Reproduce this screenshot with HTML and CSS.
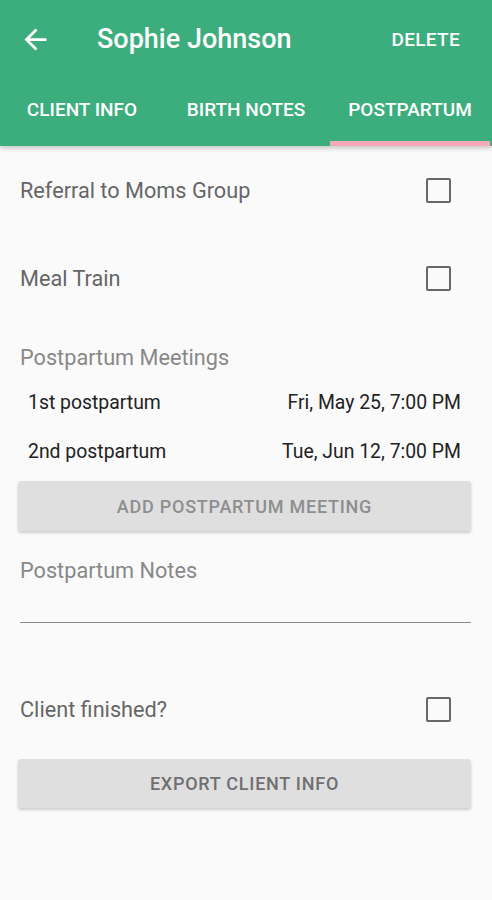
FILE: index.html
```html
<!DOCTYPE html>
<html>
<head>
<meta charset="utf-8">
<link rel="stylesheet" href="styles.css">
</head>
<body>
<div class="app">
  <header class="appbar">
    <div class="toolbar">
      <svg class="back" viewBox="0 0 24 24" width="33" height="33"><path fill="#fff" d="M20 11H7.83l5.59-5.59L12 4l-8 8 8 8 1.41-1.41L7.83 13H20v-2z"/></svg>
      <div class="title">Sophie Johnson</div>
      <div class="action">DELETE</div>
    </div>
    <nav class="tabs">
      <div class="tab">CLIENT INFO</div>
      <div class="tab">BIRTH NOTES</div>
      <div class="tab active">POSTPARTUM</div>
    </nav>
  </header>
  <main class="content">
    <div class="check-row">
      <span class="label">Referral to Moms Group</span>
      <span class="box"></span>
    </div>
    <div class="check-row">
      <span class="label">Meal Train</span>
      <span class="box"></span>
    </div>
    <div class="section-label meetings-label">Postpartum Meetings</div>
    <div class="meeting"><span>1st postpartum</span><span>Fri, May 25, 7:00 PM</span></div>
    <div class="meeting"><span>2nd postpartum</span><span>Tue, Jun 12, 7:00 PM</span></div>
    <div class="btn btn-add">ADD POSTPARTUM MEETING</div>
    <div class="section-label notes-label">Postpartum Notes</div>
    <div class="notes-input"></div>
    <div class="check-row finished">
      <span class="label">Client finished?</span>
      <span class="box"></span>
    </div>
    <div class="btn btn-export">EXPORT CLIENT INFO</div>
  </main>
</div>
</body>
</html>
```
FILE: styles.css
```css
* { box-sizing: border-box; }
html, body { margin: 0; padding: 0; }
body {
  background: #fafafa;
  font-family: Roboto, "Noto Sans", sans-serif;
  width: 492px;
  height: 900px;
  overflow: hidden;
}
.appbar {
  background: #3cad7d;
  color: #fff;
  box-shadow: 0 2px 5px rgba(0,0,0,0.22);
  position: relative;
  z-index: 1;
}
.toolbar {
  height: 78px;
  display: flex;
  align-items: center;
  padding: 0 32px 0 19px;
}
.back { display: block; flex: none; }
.title {
  margin-left: 45px;
  font-size: 27px;
  font-weight: 500;
  flex: 1;
}
.action {
  font-size: 19px;
  font-weight: 500;
  letter-spacing: 0.3px;
}
.tabs {
  display: flex;
  height: 68px;
}
.tab {
  flex: 1;
  display: flex;
  align-items: center;
  justify-content: center;
  font-size: 19px;
  font-weight: 500;
  color: #fff;
  padding-bottom: 0;
  border-bottom: 5px solid transparent;
  margin: 0 2px;
}
.tab.active { border-bottom-color: #f5a9bb; }
.content {
  padding: 0 21px 0 20px;
}
.check-row {
  height: 88px;
  display: flex;
  align-items: center;
  justify-content: space-between;
}
.label {
  font-size: 21.7px;
  color: #666;
}
.box {
  width: 25px;
  height: 25px;
  border: 2.5px solid #686868;
  border-radius: 2px;
  margin-right: 20px;
}
.section-label {
  font-size: 21.7px;
  line-height: 24px;
  color: #888;
}
.meetings-label { margin-top: 24px; margin-bottom: 8px; }
.meeting {
  height: 49px;
  display: flex;
  align-items: center;
  justify-content: space-between;
  padding: 0 10px 0 8px;
  font-size: 19.4px;
  color: #222;
}
.btn {
  height: 50px;
  margin: 0 0 0 -2px;
  background: #dfdfdf;
  border-radius: 3px;
  box-shadow: 0 2px 3px rgba(0,0,0,0.18);
  display: flex;
  align-items: center;
  justify-content: center;
  font-size: 18px;
  font-weight: 500;
  letter-spacing: 0.75px;
}
.btn-add { margin-top: 5px; color: #8e8e8e; }
.notes-label { margin-top: 28px; }
.notes-input {
  height: 40px;
  border-bottom: 1.5px solid #8a8a8a;
}
.finished { margin-top: 42px; }
.btn-export { margin-top: 6px; height: 49px; color: #707070; }
```
